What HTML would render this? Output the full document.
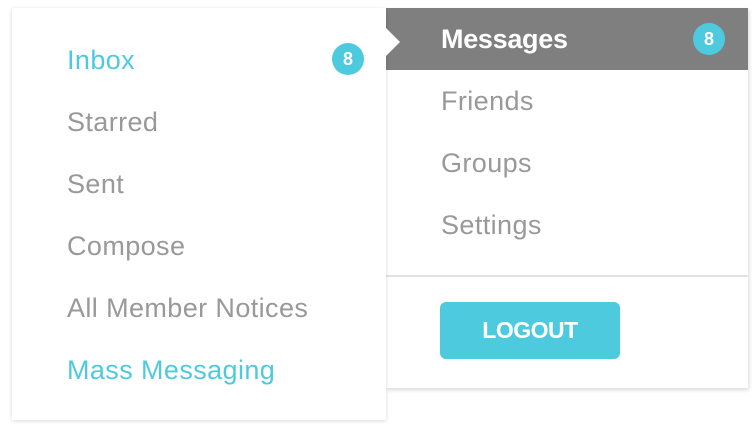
<!DOCTYPE html>
<html><head><meta charset="utf-8"><style>
body{margin:0;width:756px;height:432px;background:#fff;position:relative;overflow:hidden;font-family:"Liberation Sans",sans-serif;}
.lp{position:absolute;left:12px;top:8px;width:374px;height:412px;background:#fff;box-shadow:0 1px 4px rgba(0,0,0,.15);z-index:2}
.rp{position:absolute;left:386px;top:8px;width:362px;height:380px;background:#fff;box-shadow:1px 2px 4px rgba(0,0,0,.15);z-index:1}
.t{position:absolute;font-size:27px;color:#999;line-height:30px;white-space:nowrap;letter-spacing:0.4px}
.c{color:#4ecadf}
.badge{position:absolute;width:32px;height:32px;border-radius:50%;background:#4ecadf;color:#fff;font-weight:bold;font-size:18px;text-align:center;line-height:32px}
.msg{position:absolute;left:0;top:0;width:362px;height:62px;background:#7f7f7f}
.arrow{position:absolute;left:386px;top:28px;width:0;height:0;border-top:14px solid transparent;border-bottom:14px solid transparent;border-left:14px solid #fff;z-index:3}
.div{position:absolute;left:0;top:267px;width:362px;height:2px;background:#e3e3e3}
.btn{position:absolute;left:54px;top:294px;width:180px;height:57px;border-radius:6px;background:#4ecadf;color:#fff;font-weight:bold;font-size:23px;text-align:center;line-height:57px;letter-spacing:-0.5px}
</style></head><body>
<div class="lp">
<div class="t c" style="left:55px;top:37px">Inbox</div>
<div class="badge" style="left:320px;top:35px">8</div>
<div class="t" style="left:55px;top:99px">Starred</div>
<div class="t" style="left:55px;top:161px">Sent</div>
<div class="t" style="left:55px;top:223px">Compose</div>
<div class="t" style="left:55px;top:285px">All Member Notices</div>
<div class="t c" style="left:55px;top:347px">Mass Messaging</div>
</div>
<div class="arrow"></div>
<div class="rp">
<div class="msg"></div>
<div class="t" style="left:55px;top:16px;color:#fff;font-weight:bold;letter-spacing:-0.3px">Messages</div>
<div class="badge" style="left:307px;top:15px">8</div>
<div class="t" style="left:55px;top:78px">Friends</div>
<div class="t" style="left:55px;top:140px">Groups</div>
<div class="t" style="left:55px;top:202px">Settings</div>
<div class="div"></div>
<div class="btn">LOGOUT</div>
</div>
</body></html>
